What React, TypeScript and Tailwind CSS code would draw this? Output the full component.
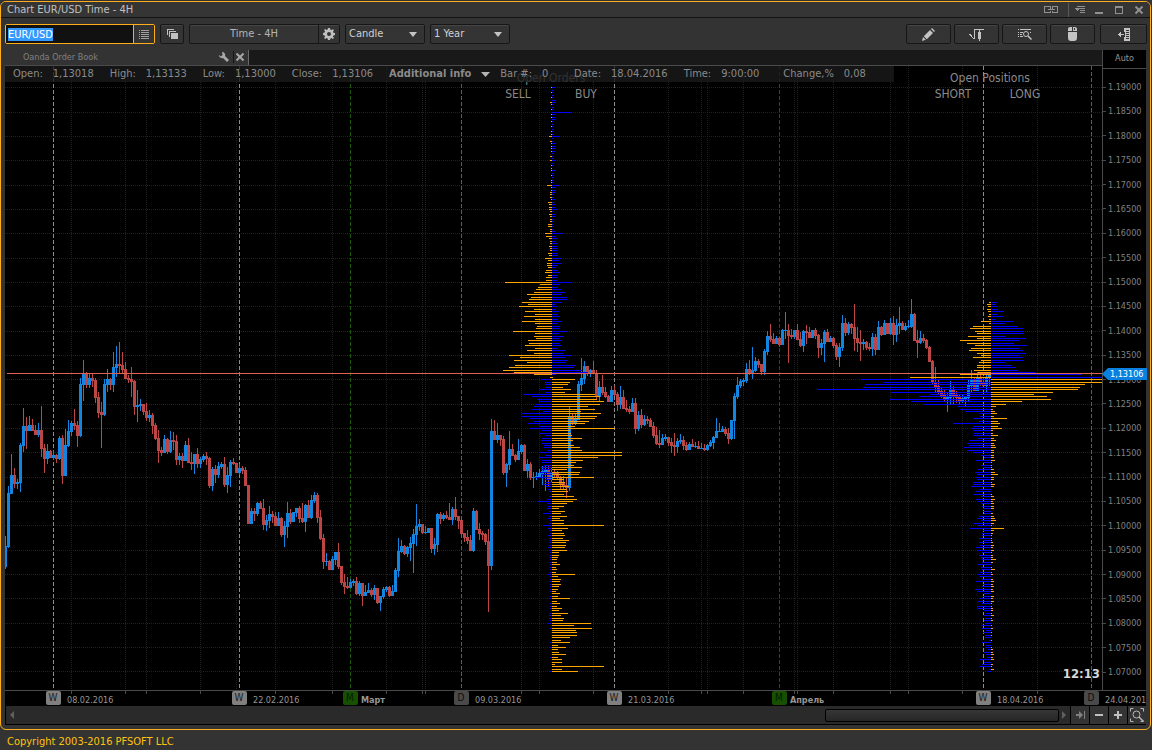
import type { ReactNode } from 'react';
import clsx from 'clsx';

const BLUE = '#1185e0';
const RED = '#bc4646';
const ORANGE = '#ffa500';
const BOOK_BLUE = '#0000ff';

const FONT = '"DejaVu Sans Condensed", "DejaVu Sans", "Noto Sans", sans-serif';

const LEFT = 5;
const TOP = 66;
const RIGHT = 1102;
const BOTTOM = 690;
const CURRENT_Y = 373;

// y of the n-th 0.0005 price level below 1.19
const levelY = (n: number) => Math.round(87.4 + 2.433 * n);

// [high, low, close] for each bar, a bar opens where the last one closed
const bars: number[][] = [
  [536, 569, 546], [486, 548, 493], [454, 493, 475], [468, 488, 483], [479, 489, 482], [443, 492, 445],
  [408, 452, 426], [417, 449, 430], [416, 430, 425], [419, 430, 430], [425, 435, 434], [423, 437, 430],
  [406, 457, 448], [444, 473, 458], [444, 464, 451], [450, 458, 457], [450, 460, 455], [454, 463, 458],
  [436, 460, 438], [435, 484, 475], [429, 475, 445], [420, 447, 431], [421, 436, 423], [409, 430, 425],
  [421, 447, 435], [378, 437, 384], [360, 401, 374], [372, 388, 384], [374, 388, 378], [374, 387, 380],
  [378, 403, 397], [392, 418, 412], [402, 448, 414], [379, 416, 384], [369, 392, 379], [378, 390, 384],
  [352, 392, 367], [346, 377, 364], [342, 374, 365], [352, 374, 369], [362, 379, 378], [375, 383, 379],
  [367, 397, 381], [380, 415, 406], [390, 422, 405], [399, 411, 404], [404, 415, 411], [403, 421, 417],
  [410, 422, 415], [413, 434, 425], [423, 440, 438], [430, 463, 450], [447, 456, 452], [435, 452, 439],
  [438, 454, 451], [431, 453, 440], [432, 450, 441], [435, 465, 459], [453, 465, 456], [453, 468, 460],
  [441, 461, 445], [438, 463, 462], [452, 470, 463], [454, 474, 454], [448, 468, 463], [457, 468, 459],
  [454, 462, 456], [452, 465, 458], [457, 488, 485], [467, 491, 469], [465, 483, 474], [462, 478, 466],
  [462, 469, 464], [457, 487, 484], [467, 493, 475], [460, 487, 462], [458, 465, 463], [463, 473, 472],
  [464, 475, 468], [466, 474, 470], [467, 486, 485], [485, 523, 523], [508, 524, 511], [508, 521, 513],
  [502, 516, 503], [501, 509, 508], [499, 530, 524], [515, 531, 520], [506, 528, 514], [511, 523, 516],
  [512, 526, 525], [512, 526, 518], [517, 537, 534], [521, 547, 526], [502, 538, 513], [509, 524, 521],
  [512, 522, 512], [508, 517, 508], [506, 523, 518], [503, 523, 521], [504, 532, 505], [500, 517, 517],
  [495, 519, 500], [492, 503, 495], [493, 523, 517], [510, 540, 538], [534, 569, 561], [553, 566, 561],
  [560, 569, 569], [556, 570, 559], [552, 565, 552], [543, 569, 566], [566, 585, 582], [574, 594, 586],
  [577, 589, 587], [579, 588, 582], [579, 586, 581], [577, 595, 593], [581, 596, 583], [583, 606, 595],
  [585, 596, 592], [583, 593, 590], [588, 597, 594], [585, 600, 588], [588, 604, 602], [596, 611, 596],
  [587, 599, 589], [586, 592, 587], [586, 597, 595], [585, 596, 591], [568, 591, 570], [538, 577, 551],
  [540, 553, 546], [545, 555, 553], [546, 557, 547], [537, 561, 543], [529, 573, 534], [504, 546, 526],
  [519, 531, 524], [524, 534, 532], [526, 534, 532], [528, 533, 528], [528, 553, 548], [538, 555, 544],
  [513, 552, 514], [512, 524, 518], [513, 521, 515], [511, 519, 517], [503, 520, 519], [507, 525, 509],
  [497, 520, 516], [516, 529, 520], [518, 538, 533], [533, 542, 537], [530, 544, 540], [535, 551, 550],
  [508, 552, 511], [510, 530, 529], [523, 540, 533], [531, 540, 534], [533, 545, 541], [529, 612, 565],
  [419, 570, 431], [420, 440, 439], [423, 443, 435], [435, 446, 439], [436, 475, 472], [463, 487, 464],
  [431, 470, 449], [444, 456, 455], [454, 462, 459], [439, 460, 451], [444, 454, 445], [444, 471, 470],
  [459, 478, 464], [462, 480, 477], [472, 488, 477], [472, 480, 476], [469, 478, 473], [466, 485, 471],
  [465, 491, 470], [466, 486, 479], [467, 482, 472], [469, 477, 473], [471, 479, 477], [476, 489, 483],
  [476, 489, 485], [477, 498, 487], [407, 491, 417], [413, 425, 423], [413, 425, 419], [381, 420, 384],
  [358, 391, 378], [361, 384, 366], [366, 376, 372], [369, 377, 370], [361, 373, 373], [370, 400, 396],
  [381, 401, 387], [375, 395, 392], [387, 398, 396], [395, 402, 401], [386, 401, 390], [386, 396, 394],
  [392, 411, 404], [386, 409, 397], [390, 409, 408], [400, 412, 409], [406, 414, 411], [398, 411, 403],
  [398, 434, 428], [411, 431, 415], [409, 428, 424], [415, 426, 419], [416, 424, 420], [418, 426, 426],
  [422, 438, 435], [427, 445, 443], [430, 448, 444], [434, 444, 438], [434, 441, 437], [437, 446, 442],
  [438, 453, 445], [433, 456, 446], [438, 453, 441], [434, 444, 440], [436, 450, 445], [442, 451, 449],
  [442, 450, 444], [439, 447, 446], [442, 448, 446], [441, 448, 448], [443, 449, 448], [444, 451, 449],
  [444, 451, 445], [440, 447, 442], [436, 449, 437], [418, 438, 431], [423, 432, 431], [426, 432, 429],
  [427, 436, 433], [428, 444, 438], [420, 440, 420], [393, 439, 396], [377, 399, 385], [379, 388, 381],
  [378, 386, 380], [363, 383, 369], [360, 375, 373], [347, 379, 370], [357, 372, 361], [359, 368, 364],
  [364, 375, 371], [349, 375, 351], [331, 355, 336], [324, 342, 339], [333, 343, 343], [336, 344, 338],
  [337, 347, 344], [329, 345, 330], [312, 339, 330], [324, 363, 335], [329, 339, 336], [330, 339, 330],
  [324, 339, 339], [332, 347, 345], [330, 352, 331], [325, 344, 332], [327, 338, 337], [330, 338, 330],
  [328, 339, 335], [334, 358, 347], [339, 355, 343], [330, 362, 332], [329, 341, 341], [336, 342, 338],
  [337, 348, 345], [343, 360, 356], [343, 367, 347], [315, 351, 323], [318, 336, 332], [322, 335, 324],
  [323, 334, 327], [304, 351, 338], [327, 352, 342], [330, 361, 343], [339, 350, 342], [341, 350, 347],
  [343, 351, 348], [333, 356, 337], [334, 355, 349], [321, 349, 327], [326, 336, 334], [320, 334, 323],
  [323, 333, 333], [318, 335, 323], [316, 345, 334], [319, 342, 325], [307, 334, 323], [321, 330, 329],
  [323, 331, 326], [320, 328, 326], [299, 328, 314], [313, 341, 340], [330, 358, 342], [331, 344, 338],
  [334, 343, 340], [339, 349, 347], [346, 362, 361], [360, 384, 382], [367, 393, 386], [380, 394, 391],
  [388, 398, 395], [390, 402, 398], [393, 412, 397], [381, 404, 390], [386, 405, 395], [391, 403, 397],
  [395, 405, 401], [395, 403, 398], [397, 406, 397], [379, 401, 385], [370, 393, 380], [377, 391, 390],
  [372, 391, 377], [375, 386, 383], [377, 386, 385], [373, 393, 377], [372, 386, 374],
];

// widths to the left and right of the axis, one pair per price level
const orders: number[][] = [
  [1, 4], [0, 1], [1, 1], [0, 2], [1, 1], [0, 4], [2, 4], [1, 2], [0, 2], [1, 1],
  [0, 20], [1, 3], [1, 3], [0, 3], [1, 1], [0, 2], [1, 1], [0, 1], [1, 2], [1, 2],
  [3, 7], [0, 1], [2, 2], [1, 4], [1, 3], [1, 3], [1, 3], [0, 1], [2, 1], [0, 2],
  [2, 3], [0, 1], [1, 2], [1, 0], [1, 4], [0, 2], [1, 2], [0, 1], [1, 2], [1, 1],
  [5, 8], [1, 4], [1, 4], [2, 3], [2, 2], [2, 2], [1, 3], [4, 2], [3, 3], [3, 3],
  [3, 5], [2, 2], [3, 3], [2, 3], [2, 2], [2, 2], [4, 2], [4, 1], [2, 2], [2, 3],
  [7, 12], [6, 4], [3, 5], [2, 4], [2, 6], [3, 5], [2, 6], [2, 5], [4, 6], [3, 6],
  [7, 9], [4, 7], [5, 10], [5, 6], [4, 4], [6, 6], [7, 8], [4, 6], [6, 6], [6, 5],
  [47, 20], [12, 8], [14, 6], [16, 9], [18, 13], [25, 9], [21, 15], [23, 15], [30, 10], [24, 3],
  [33, 5], [18, 4], [27, 7], [17, 6], [28, 8], [17, 6], [30, 10], [17, 5], [15, 8], [16, 8],
  [39, 16], [17, 7], [18, 12], [16, 7], [24, 10], [23, 8], [27, 9], [17, 5], [25, 13], [18, 11],
  [43, 20], [32, 13], [38, 16], [25, 14], [37, 24], [43, 22], [49, 30], [38, 36], [18, 3], [2, 1],
  [10, 23], [7, 18], [7, 16], [7, 11], [12, 19], [7, 13], [29, 43], [20, 48], [15, 45], [13, 52],
  [16, 48], [18, 36], [20, 43], [9, 29], [30, 49], [31, 45], [23, 43], [18, 37], [24, 33], [13, 23],
  [23, 63], [10, 18], [12, 19], [7, 20], [10, 30], [11, 21], [10, 18], [8, 22], [8, 28], [5, 30],
  [13, 70], [7, 70], [13, 46], [10, 31], [10, 24], [8, 22], [11, 30], [11, 15], [12, 28], [11, 27],
  [17, 42], [7, 12], [7, 13], [8, 12], [6, 17], [4, 15], [3, 16], [1, 12], [3, 22], [5, 25],
  [15, 21], [5, 15], [4, 12], [5, 7], [3, 13], [9, 9], [3, 15], [4, 8], [2, 12], [3, 12],
  [8, 52], [4, 16], [3, 10], [2, 12], [4, 13], [3, 11], [3, 17], [3, 14], [3, 14], [4, 13],
  [3, 15], [2, 7], [2, 7], [2, 6], [2, 5], [2, 5], [2, 8], [2, 4], [2, 5], [2, 4],
  [4, 23], [2, 6], [2, 9], [2, 8], [2, 9], [2, 7], [2, 6], [2, 4], [1, 8], [2, 6],
  [3, 18], [1, 5], [2, 8], [2, 5], [2, 10], [1, 7], [3, 16], [3, 9], [3, 12], [2, 11],
  [4, 39], [1, 22], [2, 40], [1, 24], [1, 25], [1, 25], [1, 18], [0, 9], [2, 18], [0, 6],
  [2, 14], [1, 6], [1, 7], [1, 14], [2, 6], [1, 10], [1, 10], [1, 3], [0, 52], [1, 10],
  [3, 26],
];

const positions: number[][] = [
  [2, 6], [4, 4],
  [3, 7], [4, 7], [3, 13], [2, 6], [3, 12], [2, 4], [10, 22], [2, 14], [18, 27], [21, 32],
  [16, 32], [14, 33], [23, 15], [14, 35], [31, 28], [24, 23], [16, 36], [20, 28], [22, 32], [14, 35],
  [10, 28], [18, 32], [10, 33], [12, 15], [14, 20], [14, 25], [17, 27], [13, 44], [31, 91], [81, 111],
  [129, 111], [107, 111], [126, 94], [128, 89], [174, 87], [100, 62], [61, 43], [72, 56], [101, 60], [80, 31],
  [68, 15], [33, 5], [31, 2], [25, 4], [11, 6], [11, 3], [17, 16], [12, 7], [38, 9], [18, 7],
  [19, 11], [18, 2], [17, 2], [17, 7], [13, 3], [22, 5], [24, 3], [22, 4], [27, 5], [24, 3],
  [18, 3], [10, 3], [7, 3], [15, 4], [8, 1], [10, 1], [8, 1], [13, 3], [16, 4], [14, 7],
  [16, 3], [14, 3], [18, 1], [18, 4], [20, 3], [11, 0], [15, 0], [17, 1], [10, 3], [15, 4],
  [14, 2], [10, 3], [9, 3], [8, 3], [8, 0], [7, 2], [12, 3], [14, 4], [10, 5], [17, 3],
  [14, 1], [21, 13], [8, 3], [9, 2], [9, 1], [12, 1], [8, 1], [12, 2], [11, 3], [15, 2],
  [13, 3], [9, 1], [12, 2], [10, 2], [9, 5], [9, 2], [13, 0], [10, 1], [9, 4], [11, 1],
  [13, 2], [11, 0], [9, 2], [15, 3], [8, 2], [9, 3], [16, 2], [14, 3], [7, 0], [8, 3],
  [12, 2], [13, 3], [9, 1], [14, 1], [14, 2], [7, 2], [5, 1], [8, 3], [6, 1], [7, 2],
  [5, 0], [10, 1], [9, 2], [5, 0], [8, 1], [6, 1], [6, 0], [2, 1], [9, 0], [5, 0],
  [5, 1], [3, 2], [7, 2], [5, 3], [4, 2], [11, 3], [7, 0], [9, 2], [11, 1], [2, 3],
  [3, 0],
];

const gridX = [
  71, 125, 146, 200, 236, 275, 332, 386, 422, 425, 521, 539, 593, 668, 701, 707, 743, 794, 797, 833, 890, 908, 962,
  1037,
];

const markers = [
  { x: 53, kind: 'W', label: '08.02.2016' },
  { x: 239, kind: 'W', label: '22.02.2016' },
  { x: 350, kind: 'M', label: 'Март' },
  { x: 461, kind: 'D', label: '09.03.2016' },
  { x: 614, kind: 'W', label: '21.03.2016' },
  { x: 779, kind: 'M', label: 'Апрель' },
  { x: 983, kind: 'W', label: '18.04.2016' },
  { x: 1091, kind: 'D', label: '24.04.2016' },
];

const lineColor: Record<string, string> = { W: '#8c8c8c', M: '#1b5a08', D: '#5c5c5c' };
const badgeColor: Record<string, string> = { W: '#808080', M: '#165000', D: '#4a4a4a' };
const letterColor: Record<string, string> = { W: '#1c1c1c', M: '#041c00', D: '#0c0c0c' };

const prices = Array.from({ length: 25 }, (_, i) => (1.19 - i * 0.005).toFixed(5));

const Profile = ({ x, rows, start, flip }: { x: number; rows: number[][]; start: number; flip: number }) => (
  <g>
    {rows.map(([left, right], i) => {
      const level = start + i;
      const y = levelY(level);
      const above = level < flip;
      return (
        <g key={level}>
          <rect x={x - left} y={y} width={left} height={1} fill={above || level === 119 ? ORANGE : BOOK_BLUE} />
          <rect x={x} y={y} width={right} height={1} fill={above ? BOOK_BLUE : ORANGE} />
        </g>
      );
    })}
  </g>
);

const Chart = () => (
  <svg
    viewBox={`${LEFT} ${TOP} ${RIGHT - LEFT} ${BOTTOM - TOP}`}
    className="block h-auto w-full bg-black"
    shapeRendering="crispEdges"
    fontFamily={FONT}
  >
    <g stroke="#202020" strokeDasharray="1 1">
      {prices.map((p, i) => (
        <line key={p} x1={LEFT} x2={RIGHT} y1={levelY(i * 10) + 0.5} y2={levelY(i * 10) + 0.5} />
      ))}
      {gridX.map((x) => (
        <line key={x} x1={x + 0.5} x2={x + 0.5} y1={TOP} y2={BOTTOM} />
      ))}
    </g>
    {markers.map((m) => (
      <line
        key={m.x}
        x1={m.x + 0.5}
        x2={m.x + 0.5}
        y1={TOP}
        y2={BOTTOM}
        stroke={lineColor[m.kind]}
        strokeDasharray="4 2"
      />
    ))}
    {bars.map(([high, low, close], i) => {
      const x = LEFT + i * 3;
      const open = i === 0 ? 566 : bars[i - 1][2];
      const fill = close <= open ? BLUE : RED;
      return (
        <g key={x} fill={fill}>
          <rect x={x} y={high} width={1} height={Math.max(low - high, 1)} />
          <rect x={x - 1} y={Math.min(open, close)} width={3} height={Math.abs(close - open) + 1} />
        </g>
      );
    })}
    <Profile x={552} rows={orders} start={0} flip={119} />
    <Profile x={991} rows={positions} start={88} flip={120} />
    <rect x={7} y={CURRENT_Y} width={RIGHT - 7} height={1} fill="#e26150" />
    <g fill="#8a8a8a" fontSize={12} textAnchor="middle">
      <text x={551} y={82}>Open Orders</text>
      <text x={518} y={98}>SELL</text>
      <text x={586} y={98}>BUY</text>
      <text x={990} y={82}>Open Positions</text>
      <text x={953} y={98}>SHORT</text>
      <text x={1025} y={98}>LONG</text>
    </g>
    <text x={1100} y={678} fill="#d8d8d8" fontSize={13} fontWeight="bold" textAnchor="end">
      12:13
    </text>
  </svg>
);

const TimeAxis = () => (
  <svg viewBox="5 690 1141 16" className="block h-auto w-full bg-black" fontFamily={FONT}>
    <g fill="#4a4a4a" shapeRendering="crispEdges">
      <rect x={5} y={690} width={1141} height={1} />
      {gridX.map((x) => (
        <rect key={x} x={x} y={691} width={1} height={3} />
      ))}
    </g>
    {markers.map((m) => (
      <g key={m.x}>
        <rect x={m.x - 7} y={691} width={15} height={14} rx={2} fill={badgeColor[m.kind]} />
        <text x={m.x} y={701} fontSize={10} textAnchor="middle" fill={letterColor[m.kind]}>
          {m.kind}
        </text>
        <text
          x={m.x + (m.kind === 'M' ? 11 : 14)}
          y={703}
          fontSize={9}
          fontWeight={m.kind === 'M' ? 'bold' : 'normal'}
          fill="#969696"
        >
          {m.label}
        </text>
      </g>
    ))}
  </svg>
);

const InfoItem = ({ label, value, className }: { label: string; value: string; className?: string }) => (
  <span className={clsx('flex gap-2.5', className)}>
    <span>{label}</span>
    <span className="min-w-4">{value}</span>
  </span>
);

const InfoBar = () => (
  <div className="absolute top-0 left-0 flex h-4 items-center gap-4 bg-[#1a1a1acc] pr-7 pl-2 text-[11px] leading-4 whitespace-nowrap text-[#8a8a8a]">
    <InfoItem label="Open:" value="1,13018" />
    <InfoItem label="High:" value="1,13133" />
    <InfoItem label="Low:" value="1,13000" />
    <InfoItem label="Close:" value="1,13106" />
    <button type="button" className="-mr-1.5 flex items-center gap-2.5 font-bold">
      Additional info
      <svg viewBox="0 0 9 5" width={9} height={5} fill="#b4b4b4">
        <path d="M0 0h9L4.5 5z" />
      </svg>
    </button>
    <InfoItem label="Bar #:" value="0" />
    <InfoItem label="Date:" value="18.04.2016" />
    <InfoItem label="Time:" value="9:00:00" />
    <InfoItem label="Change,%" value="0,08" className="pl-2" />
  </div>
);

const PriceAxis = () => (
  <div className="relative flex w-11 flex-none flex-col border-l border-[#4a4a4a] bg-black">
    <button type="button" className="h-[19px] border-b border-[#4a4a4a] text-[9px] text-[#969696]">
      Auto
    </button>
    <ul className="flex flex-1 flex-col justify-between py-3 text-[9px] leading-3 text-[#808080]">
      {prices.map((p) => (
        <li key={p} className="flex items-center gap-0.5">
          <span className="h-px w-[3px] bg-[#4a4a4a]" />
          {p}
        </li>
      ))}
    </ul>
    <div className="absolute top-[318px] -left-px flex h-3 w-[45px]">
      <svg viewBox="0 0 6 12" width={6} height={12} fill="#0a80e0">
        <path d="M6 0v12L0 6z" />
      </svg>
      <span className="flex-1 bg-[#0a80e0] pl-0.5 text-[9px] leading-3 text-white">1,13106</span>
    </div>
  </div>
);

type ToolButtonProps = { label: string; className?: string; children: ReactNode };

const ToolButton = ({ label, className, children }: ToolButtonProps) => (
  <button
    type="button"
    aria-label={label}
    className={clsx(
      'flex h-5 items-center justify-center rounded-xs border border-[#161616] bg-[#343434] shadow-[inset_0_1px_0_#454545]',
      className,
    )}
  >
    {children}
  </button>
);

const Dropdown = ({ label, options }: { label: string; options: string[] }) => (
  <div className="relative h-5 w-20">
    <select
      aria-label={label}
      className="block h-5 w-full appearance-none rounded-xs border border-[#161616] bg-[#343434] pl-[3px] text-[11px] leading-4 text-[#d0d0d0] shadow-[inset_0_1px_0_#454545] outline-none"
    >
      {options.map((o) => (
        <option key={o}>{o}</option>
      ))}
    </select>
    <svg viewBox="0 0 8 5" width={8} height={5} fill="#c4c4c4" className="pointer-events-none absolute top-2 right-2">
      <path d="M0 0h8L4 5z" />
    </svg>
  </div>
);

const TitleBar = () => (
  <header className="flex h-4 items-center border-b border-[#121212] bg-[#353535] pr-[7px] pl-1.5">
    <h1 className="flex-1 text-[11px] leading-4 text-[#c0c0c0]">Chart EUR/USD Time - 4H</h1>
    <div className="flex items-center text-[#909090]">
      <button type="button" aria-label="Link" className="mr-2.5">
        <svg viewBox="0 0 14 7" width={14} height={7} fill="none" stroke="currentColor" shapeRendering="crispEdges">
          <path d="M6 2.5V.5H.5v6H6v-2M8 2.5V.5h5.5v6H8v-2M3.5 3.5h7" />
        </svg>
      </button>
      <span className="mr-1.5 h-3.5 w-px bg-[#5a5a5a]" />
      <button type="button" aria-label="Menu" className="mr-2.5">
        <svg viewBox="0 0 10 8" width={10} height={8} fill="currentColor" shapeRendering="crispEdges">
          <path d="M2 0h8v1H2zM0 2h10v1H0zM1 3h3v1H1zM2 4h1v1H2zM5 4h5v1H5zM5 6h5v1H5z" />
        </svg>
      </button>
      <button type="button" aria-label="Minimize" className="mr-3">
        <svg viewBox="0 0 8 8" width={8} height={8} fill="currentColor" shapeRendering="crispEdges">
          <path d="M0 6h8v2H0z" />
        </svg>
      </button>
      <button type="button" aria-label="Maximize" className="mr-3">
        <svg viewBox="0 0 8 8" width={8} height={8} fill="currentColor" shapeRendering="crispEdges">
          <path fillRule="evenodd" d="M0 0h8v8H0zM1 2h6v5H1z" />
        </svg>
      </button>
      <button type="button" aria-label="Close">
        <svg viewBox="0 0 8 8" width={8} height={8} stroke="currentColor" strokeWidth={2}>
          <path d="M.5.5l7 7M7.5.5l-7 7" />
        </svg>
      </button>
    </div>
  </header>
);

const Toolbar = () => (
  <div className="flex h-8 items-center gap-[5px] bg-[#333333] pr-[3px] pl-1">
    <div className="flex h-5 w-[150px] items-center rounded-xs border border-[#ffae1a]">
      <input
        autoFocus
        aria-label="Symbol"
        defaultValue="EUR/USD"
        onFocus={(e) => e.target.select()}
        className="h-full min-w-0 flex-1 bg-[#111111] pl-0.5 text-[11px] text-white caret-[#ffae1a] outline-none selection:bg-[#3399ff] selection:text-white"
      />
      <button
        type="button"
        aria-label="Symbol list"
        className="flex h-full w-[21px] items-center justify-center border-l border-[#ffae1a] bg-[#343434]"
      >
        <svg viewBox="0 0 10 9" width={10} height={9} fill="#a0a0a0" shapeRendering="crispEdges">
          <path d="M0 0h1v1H0zM2 0h8v1H2zM0 2h1v1H0zM2 2h8v1H2zM0 4h1v1H0zM2 4h8v1H2zM0 6h1v1H0zM2 6h8v1H2zM0 8h1v1H0zM2 8h8v1H2z" />
        </svg>
      </button>
    </div>
    <ToolButton label="Templates" className="w-6">
      <svg viewBox="0 0 11 10" width={11} height={10} fill="#c0c0c0" shapeRendering="crispEdges">
        <path d="M0 0h7v1H1v5H0zM2 2h7v1H3v5H2zM4 4h7v6H4z" />
      </svg>
    </ToolButton>
    <div className="flex">
      <ToolButton label="Time - 4H" className="w-[130px] rounded-r-none text-[11px] text-[#b4b4b4]">
        Time - 4H
      </ToolButton>
      <ToolButton label="Settings" className="-ml-px w-[22px] rounded-l-none">
        <svg viewBox="0 0 12 12" width={12} height={12} fill="#c0c0c0">
          <path
            fillRule="evenodd"
            d="M5 0h2l.4 1.7 1 .4L10 1.200l.9.9L10 3.700l.4 1L12 5v2l-1.600.4-.4 1 .9 1.500-1 1-1.500-.9-1 .4L7 12H5l-.4-1.600-1-.4-1.500.9-1-1 .9-1.500-.4-1L0 7V5l1.600-.4.4-1-.9-1.500 1-1 1.500.9 1-.4zM6 4a2 2 0 1 0 0 4 2 2 0 0 0 0-4z"
          />
        </svg>
      </ToolButton>
    </div>
    <Dropdown label="Chart style" options={['Candle', 'Bar', 'Line']} />
    <Dropdown label="Range" options={['1 Year', '1 Month', '1 Week']} />
    <div className="ml-auto flex gap-[3px]">
      <ToolButton label="Drawing tools" className="w-[45px]">
        <svg viewBox="0 0 13 13" width={13} height={13} fill="#c4c4c4">
          <path d="M0 13l1-4 2.800 2.800zM1.800 8.200L8 2l3 3-6.200 6.200zM9 1l1-1 3 3-1 1z" />
        </svg>
      </ToolButton>
      <ToolButton label="Indicators" className="w-[45px]">
        <svg viewBox="0 0 15 13" width={15} height={13} fill="#c4c4c4" shapeRendering="crispEdges">
          <path d="M0 6h2v1H0zM1 7h2v1H1zM2 8h1v1H2zM3 9h1v1H3zM4 10h2v1H4zM5 1h1v10H5zM5 1h10v1H5zM10 2h1v11h-1zM9 4h3v7H9z" />
        </svg>
      </ToolButton>
      <ToolButton label="Inspect data" className="w-[45px]">
        <svg viewBox="0 0 14 12" width={14} height={12} fill="#c4c4c4">
          <path
            shapeRendering="crispEdges"
            d="M0 1h1v1H0zM2 1h11v1H2zM0 4h1v1H0zM2 4h3v1H2zM0 6h1v1H0zM2 6h2v1H2zM0 8h1v1H0zM2 8h3v1H2zM12 4h1v1h-1z"
          />
          <circle cx={8} cy={6} r={2.500} fill="none" stroke="#c4c4c4" />
          <path d="M10 8l3.500 3.500" stroke="#c4c4c4" strokeWidth={1.500} />
        </svg>
      </ToolButton>
      <ToolButton label="Mouse trading" className="w-[45px]">
        <svg viewBox="0 0 9 14" width={9} height={14} fill="#c4c4c4">
          <path d="M0 4V2a2 2 0 0 1 2-2h2v4zM5 0h2a2 2 0 0 1 2 2v2H5zM0 5h9v6a3 3 0 0 1-3 3H3a3 3 0 0 1-3-3z" />
          <path d="M6 1h1v2H6z" fill="#343434" />
        </svg>
      </ToolButton>
      <ToolButton label="Side panel" className="ml-0.5 w-[47px]">
        <svg viewBox="0 0 12 13" width={12} height={13} fill="#c4c4c4" shapeRendering="crispEdges">
          <path fillRule="evenodd" d="M6 0h6v13H6V9h1V4H6zM8 2v1h3V2zM8 4v1h3V4zM8 6v1h3V6zM8 8v1h3V8zM8 10v1h3v-1z" />
          <path d="M0 6h6v1H0zM1 5h1v3H1zM2 4h1v5H2z" />
        </svg>
      </ToolButton>
    </div>
  </div>
);

const OverlayTabs = () => (
  <div className="flex h-4 border-b border-[#4a4a4a] bg-[#191919]">
    <div className="flex w-[244px] items-center border-r border-[#6a6a6a] bg-[#333333] pr-1 pb-0.5 pl-[18px]">
      <span className="flex-1 text-[9px] leading-3 text-[#808080]">Oanda Order Book</span>
      <button type="button" aria-label="Overlay settings" className="mr-1">
        <svg viewBox="0 0 10 10" width={10} height={10} fill="#a8a8a8">
          <path d="M3 0a3 3 0 0 1 3 4l4 4-2 2-4-4a3 3 0 0 1-4-3l2 1.500L3.500 3z" />
        </svg>
      </button>
      <span className="mr-0.5 h-3 w-px bg-[#161616]" />
      <button type="button" aria-label="Remove overlay">
        <svg viewBox="0 0 8 8" width={8} height={8} stroke="#a8a8a8" strokeWidth={2}>
          <path d="M.5.5l7 7M7.500.5l-7 7" />
        </svg>
      </button>
    </div>
  </div>
);

const scrollButton = 'flex h-full w-[19px] items-center justify-center border-l border-black bg-[#343434]';

const ScrollRow = () => (
  <div className="flex h-[19px] items-center border-b border-l border-black bg-[#2a2a2a]">
    <button type="button" aria-label="Scroll left" className="pl-1">
      <svg viewBox="0 0 4 8" width={4} height={8} fill="#606060">
        <path d="M4 0v8L0 4z" />
      </svg>
    </button>
    <div className="flex flex-1 justify-end">
      <div className="h-[13px] w-[234px] rounded-xs border border-black bg-linear-to-b from-[#363636] to-[#262626]" />
    </div>
    <button type="button" aria-label="Scroll right" className="pr-1 pl-[3px]">
      <svg viewBox="0 0 4 8" width={4} height={8} fill="#606060">
        <path d="M0 0v8l4-4z" />
      </svg>
    </button>
    <button type="button" aria-label="Go to last bar" className={scrollButton}>
      <svg viewBox="0 0 9 8" width={9} height={8} fill="#808080">
        <path d="M0 3h3V0l4 4-4 4V5H0zM8 0h1v8H8z" />
      </svg>
    </button>
    <button type="button" aria-label="Zoom out" className={scrollButton}>
      <span className="h-0.5 w-2 bg-[#c0c0c0]" />
    </button>
    <button type="button" aria-label="Zoom in" className={scrollButton}>
      <svg viewBox="0 0 8 8" width={8} height={8} fill="#c0c0c0" shapeRendering="crispEdges">
        <path d="M3 0h2v3h3v2H5v3H3V5H0V3h3z" />
      </svg>
    </button>
    <button type="button" aria-label="Zoom to area" className={scrollButton}>
      <svg viewBox="0 0 14 14" width={14} height={14} fill="none" stroke="#b8b8b8">
        <path d="M.5 3.500v-3h3M10.500.5h3v3M.5 10.500v3h3M10.500 13.500h3v-1" />
        <circle cx={6.500} cy={6.500} r={3.500} />
        <path d="M9 9l4 4" strokeWidth={1.500} />
      </svg>
    </button>
  </div>
);

const App = () => (
  <div className="flex min-h-screen flex-col bg-[#333333] pt-px" style={{ fontFamily: FONT }}>
    <main className="mr-px overflow-hidden rounded-md border border-[#ffae1a] bg-[#333333]">
      <TitleBar />
      <Toolbar />
      <div className="px-1 pb-1">
        <div className="flex">
          <div className="min-w-0 flex-1">
            <OverlayTabs />
            <div className="relative">
              <Chart />
              <InfoBar />
            </div>
          </div>
          <PriceAxis />
        </div>
        <TimeAxis />
        <ScrollRow />
      </div>
    </main>
    <footer className="flex flex-1 items-center px-[7px] pt-1 text-[11px] leading-4 text-[#ffc20e]">
      Copyright 2003-2016 PFSOFT LLC
    </footer>
  </div>
);

export default App;
